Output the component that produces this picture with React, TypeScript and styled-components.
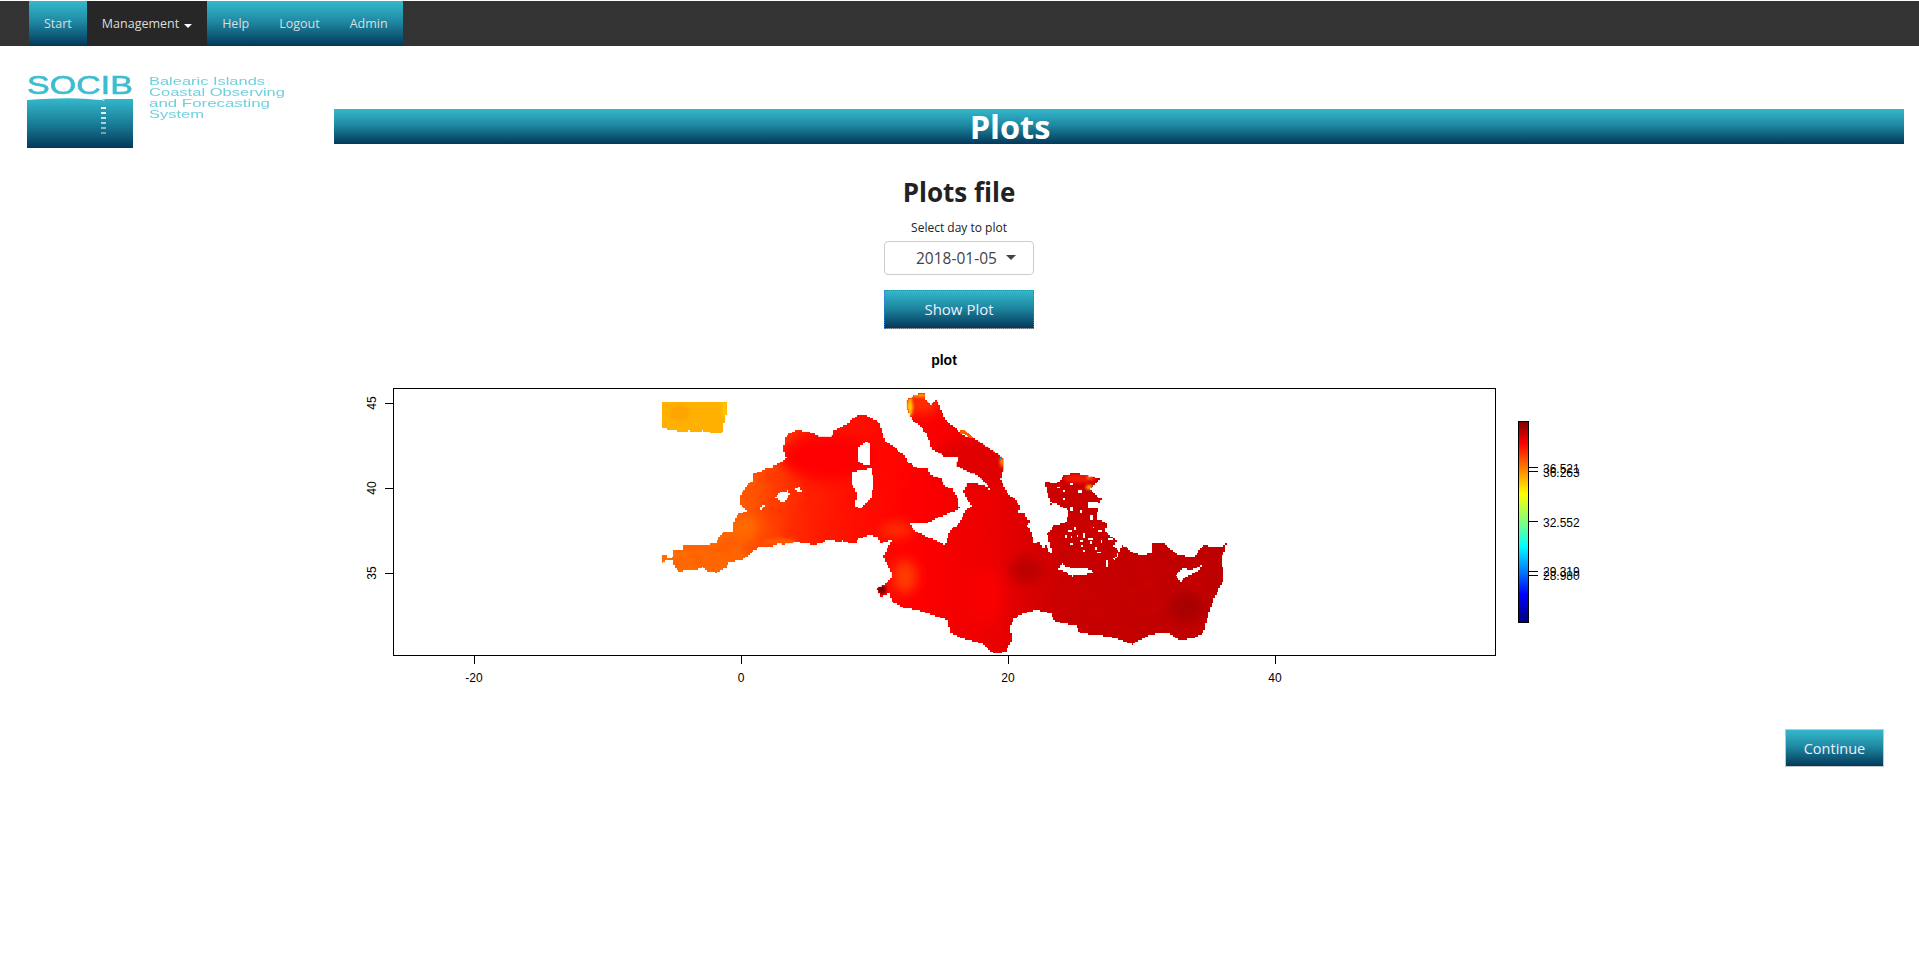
import React from 'react';
import styled, { createGlobalStyle, css } from 'styled-components';

const GlobalStyle = createGlobalStyle`
  html, body {
    margin: 0;
    padding: 0;
    background: #fff;
    font-family: 'Open Sans', 'Liberation Sans', sans-serif;
    font-size: 14px;
    color: #222;
  }
`;

const oceanGradient = css`
  background: linear-gradient(to bottom, #35b8cc 0%, #1f8aa3 45%, #03385a 100%);
`;

type Pt = [number, number];

// the plot comes out of R as a coarse raster, so coastlines get snapped to its cells
const CELL = 5;
const toCells = (pts: Pt[]): string => {
  const snap = (v: number) => Math.round(v / CELL) * CELL;
  let d = '';
  let px = 0;
  let py = 0;
  pts.forEach((p, i) => {
    const q = pts[(i + 1) % pts.length];
    const steps = Math.max(1, Math.ceil(Math.max(Math.abs(q[0] - p[0]), Math.abs(q[1] - p[1])) / CELL));
    for (let s = 0; s < steps; s++) {
      const x = snap(p[0] + ((q[0] - p[0]) * s) / steps);
      const y = snap(p[1] + ((q[1] - p[1]) * s) / steps);
      if (!d) d = `M${x} ${y}`;
      else {
        if (x !== px) d += `H${x}`;
        if (y !== py) d += `V${y}`;
      }
      px = x;
      py = y;
    }
  });
  return d + 'Z';
};

const BISCAY: Pt[] = [
  [936, 96], [1131, 96], [1128, 135], [1120, 175], [1118, 187], [1090, 191], [1080, 187], [1060, 182],
  [1040, 185], [1020, 182], [1000, 185], [980, 182], [960, 180], [945, 176], [936, 176],
];

const WEST: Pt[] = [
  [936, 555], [945, 555], [950, 565], [965, 562], [972, 540], [1000, 538], [1002, 526], [1070, 526],
  [1080, 520], [1095, 522], [1105, 500], [1120, 484], [1150, 483], [1152, 455], [1165, 432], [1190, 422],
  [1168, 395], [1170, 375], [1190, 345], [1212, 325], [1212, 312], [1240, 298], [1265, 295], [1270, 285],
  [1300, 270], [1310, 262], [1302, 240], [1303, 205], [1315, 190], [1335, 180], [1370, 185], [1390, 190],
  [1410, 202], [1445, 197], [1450, 180], [1480, 165], [1520, 150], [1520, 520], [1500, 518], [1480, 512],
  [1465, 515], [1450, 508], [1435, 508], [1420, 518], [1395, 525], [1370, 520], [1340, 516], [1300, 524],
  [1290, 520], [1265, 530], [1230, 532], [1210, 545], [1180, 570], [1160, 572], [1140, 575], [1128, 595],
  [1100, 608], [1075, 605], [1060, 590], [1040, 602], [1015, 602], [990, 603], [975, 590], [968, 572],
  [950, 572], [936, 582],
];

const WEST_HOLES: Pt[][] = [
  [[1273, 380], [1288, 365], [1310, 362], [1318, 375], [1310, 392], [1295, 395], [1285, 385]],
  [[1330, 358], [1345, 352], [1353, 366], [1340, 362]],
  [[1228, 410], [1238, 402], [1243, 410], [1236, 420]],
];

const EAST_RAW: Pt[] = [
  [0, 150], [20, 135], [45, 135], [65, 145], [85, 155], [95, 185], [105, 215], [125, 225], [140, 240],
  [165, 260], [170, 275], [200, 295], [230, 295], [240, 315], [270, 325], [285, 350], [305, 355], [325, 395],
  [328, 415], [310, 425], [275, 440], [230, 460], [175, 460], [195, 485], [240, 505], [285, 525], [300, 480],
  [325, 460], [345, 420], [365, 405], [345, 375], [340, 365], [350, 340], [375, 340], [410, 350], [420, 365],
  [415, 345], [385, 315], [345, 300], [320, 285], [325, 262], [285, 258], [245, 235], [235, 200], [215, 170],
  [185, 145], [172, 115], [172, 90], [190, 75], [225, 68], [225, 90], [240, 105], [255, 90], [265, 100],
  [275, 130], [285, 150], [315, 175], [335, 195], [370, 205], [400, 225], [445, 255], [460, 270], [460, 300],
  [452, 330], [470, 370], [490, 385], [510, 410], [505, 430], [520, 430], [530, 450], [550, 445], [530, 470],
  [545, 490], [550, 520], [565, 515], [578, 540], [585, 525], [598, 550], [605, 545], [592, 490], [610, 465],
  [640, 460], [650, 450], [655, 420], [620, 400], [598, 405], [603, 395], [590, 360], [585, 335], [610, 340],
  [630, 330], [640, 315], [670, 310], [710, 316], [750, 328], [735, 345], [720, 360], [745, 385], [755, 385],
  [745, 410], [740, 440], [770, 465], [765, 485], [800, 515], [790, 530], [805, 545], [815, 525], [850, 550],
  [880, 555], [905, 548], [905, 520], [940, 520], [980, 555], [1030, 560], [1060, 525], [1090, 530],
  [1110, 530], [1128, 520], [1125, 540], [1115, 560], [1120, 630], [1100, 670], [1080, 720], [1060, 790],
  [1030, 805], [990, 810], [960, 790], [930, 790], [900, 795], [850, 823], [800, 805], [750, 795], [690, 790],
  [680, 765], [640, 760], [610, 750], [605, 730], [560, 720], [520, 730], [490, 750], [478, 775], [487, 810],
  [470, 845], [435, 852], [400, 820], [340, 805], [300, 785], [295, 750], [250, 735], [210, 722], [160, 712],
  [125, 695], [120, 670], [95, 680], [80, 655], [105, 640], [125, 620], [122, 600], [100, 555], [125, 510],
  [92, 522], [85, 500], [60, 495], [20, 510], [0, 518],
];
const EAST: Pt[] = EAST_RAW.map(([x, y]) => [x + 1500, y]);

const EAST_HOLES: Pt[][] = [
  [[25, 230], [55, 210], [62, 240], [60, 285], [45, 285], [25, 270]],
  [[5, 305], [30, 300], [65, 295], [70, 340], [65, 385], [35, 415], [15, 405], [20, 370], [5, 340]],
  [[622, 600], [635, 580], [650, 592], [710, 595], [732, 610], [670, 618], [640, 602]],
  [[975, 615], [995, 595], [1020, 600], [1065, 578], [1045, 605], [1010, 620], [995, 635]],
  [[790, 565], [805, 545], [807, 555], [795, 570]],
];

// small Aegean islands, one raster cell or a few: x, y, w, h
const ISLETS: [number, number, number, number][] = [
  [660, 340, 10, 5], [685, 360, 10, 10], [620, 350, 10, 5], [640, 360, 5, 5], [660, 412, 10, 10], [690, 420, 5, 10],
  [715, 395, 30, 20], [720, 435, 10, 15], [740, 430, 15, 20], [655, 480, 10, 5], [672, 470, 5, 10], [690, 510, 10, 5],
  [660, 520, 10, 5], [700, 490, 5, 15], [745, 480, 10, 5], [752, 510, 5, 10], [720, 512, 5, 10], [694, 525, 5, 5],
  [662, 498, 5, 5], [742, 545, 10, 5], [768, 570, 5, 20], [700, 540, 5, 5], [728, 470, 5, 5], [640, 385, 5, 5],
  [610, 398, 10, 5], [715, 505, 15, 5], [775, 505, 15, 5], [735, 530, 5, 10], [645, 495, 5, 10], [680, 495, 5, 5],
];

const JET = [
  ['0', '#800000'], ['0.11', '#ff0000'], ['0.36', '#ffff00'], ['0.5', '#7fff7f'], ['0.62', '#00ffff'],
  ['0.86', '#0000ff'], ['1', '#00007f'],
];

const navLinks = [
  { label: 'Start' },
  { label: 'Management', dark: true, caret: true },
  { label: 'Help' },
  { label: 'Logout' },
  { label: 'Admin' },
];

const logoLines: [string, number, number][] = [
  ['Balearic Islands', 13, 116],
  ['Coastal Observing', 24, 136],
  ['and Forecasting', 35, 121],
  ['System', 46, 55],
];

const CoastalLogo = () => (
  <LogoSvg viewBox="0 0 290 76" width="290" height="76">
    <defs>
      <linearGradient id="logoSea" x1="0" y1="0" x2="0" y2="1">
        <stop offset="0" stopColor="#35b8cc" />
        <stop offset="0.5" stopColor="#1a7f99" />
        <stop offset="1" stopColor="#03385a" />
      </linearGradient>
    </defs>
    <text x="27" y="22" fontFamily="'Liberation Sans', sans-serif" fontSize="26" textLength="106"
      lengthAdjust="spacingAndGlyphs" fill="#3dbdd0" stroke="#3dbdd0" strokeWidth="0.6">SOCIB</text>
    <path d="M27 28 Q 65 25 88 27 T 102 27 L 103.500 29 L 105 27 L133 27 V76 H27 Z" fill="url(#logoSea)" />
    {[35, 40, 45, 50, 55, 60].map((y, i) => (
      <rect key={y} x="101" y={y} width="5" height="2" fill="#fff" opacity={1 - i * 0.12} />
    ))}
    {logoLines.map(([t, y, w]) => (
      <text key={t} x="149" y={y} fontFamily="'Liberation Sans', sans-serif" fontSize="11"
        textLength={w} lengthAdjust="spacingAndGlyphs" fill="#6fd0de">{t}</text>
    ))}
  </LogoSvg>
);

const MedPlot = () => (
  <PlotSvg viewBox="320 345 1278 345" width="1278" height="345">
    <defs>
      <linearGradient id="medSst" gradientUnits="userSpaceOnUse" x1="936" y1="0" x2="2630" y2="0">
        <stop offset="0" stopColor="#ff7000" />
        <stop offset="0.138" stopColor="#ff6400" />
        <stop offset="0.19" stopColor="#ff4400" />
        <stop offset="0.262" stopColor="#ff2000" />
        <stop offset="0.333" stopColor="#ff1000" />
        <stop offset="0.45" stopColor="#ff0000" />
        <stop offset="0.6" stopColor="#e80000" />
        <stop offset="0.71" stopColor="#c80000" />
        <stop offset="1" stopColor="#bc0000" />
      </linearGradient>
      <linearGradient id="jet" x1="0" y1="0" x2="0" y2="1">
        {JET.map(([o, c]) => <stop key={o} offset={o} stopColor={c} />)}
      </linearGradient>
      <filter id="soft" x="-50%" y="-50%" width="200%" height="200%"><feGaussianBlur stdDeviation="18" /></filter>
      <filter id="softer" x="-50%" y="-50%" width="200%" height="200%"><feGaussianBlur stdDeviation="5" /></filter>
      <filter id="mottle" x="0" y="0" width="100%" height="100%" colorInterpolationFilters="sRGB">
        <feTurbulence type="fractalNoise" baseFrequency="0.014 0.022" numOctaves="3" seed="4" />
        <feColorMatrix values="0 0 0 0 1  0 0 0 0 0  0 0 0 0 0  1 0 0 0 0" />
        <feComponentTransfer>
          <feFuncA type="discrete" tableValues="0 0 0 0 0.1 0.2 0.3 0.4 0.5" />
        </feComponentTransfer>
      </filter>
      <clipPath id="seaClip">
        <path d={toCells(WEST)} />
        <path d={toCells(EAST)} />
      </clipPath>
      <clipPath id="biscayClip"><path d={toCells(BISCAY)} /></clipPath>
    </defs>

    <text x="944" y="365" textAnchor="middle" fontSize="14" fontWeight="700" fontFamily="'Liberation Sans', sans-serif" fill="#000">plot</text>

    <g transform="translate(350 370) scale(0.33333)" shapeRendering="crispEdges">
      <path d={toCells(BISCAY)} fill="#ffb000" />
      <g clipPath="url(#biscayClip)">
        <ellipse cx="990" cy="130" rx="30" ry="25" fill="#ffa400" filter="url(#softer)" />
        <rect x="1115" y="90" width="20" height="50" fill="#ffc400" filter="url(#softer)" />
      </g>
      <path d={toCells(WEST)} fill="url(#medSst)" />
      <path d={toCells(EAST)} fill="url(#medSst)" />
      <g clipPath="url(#seaClip)">
        <rect x="936" y="60" width="1710" height="800" filter="url(#mottle)" opacity="0.35" />
        <ellipse cx="1440" cy="260" rx="150" ry="70" fill="#ff0000" filter="url(#soft)" />
        <ellipse cx="1190" cy="470" rx="30" ry="30" fill="#ff7000" filter="url(#soft)" />
        <ellipse cx="1290" cy="515" rx="50" ry="10" fill="#ff5800" filter="url(#softer)" />
        <g transform="translate(1500 0)">
          <ellipse cx="165" cy="620" rx="35" ry="50" fill="#ff3c00" filter="url(#soft)" />
          <ellipse cx="140" cy="480" rx="50" ry="20" fill="#ff3400" filter="url(#soft)" />
          <ellipse cx="95" cy="660" rx="14" ry="14" fill="#7a0000" filter="url(#softer)" />
          <ellipse cx="1010" cy="710" rx="50" ry="45" fill="#a80000" filter="url(#soft)" />
          <ellipse cx="530" cy="600" rx="50" ry="40" fill="#bc0000" filter="url(#soft)" />
          <ellipse cx="400" cy="680" rx="60" ry="90" fill="#f80000" filter="url(#soft)" />
          <ellipse cx="370" cy="280" rx="130" ry="70" fill="#e00000" filter="url(#soft)" />
          <ellipse cx="220" cy="100" rx="45" ry="32" fill="#ff3000" filter="url(#soft)" />
          <ellipse cx="180" cy="110" rx="8" ry="30" fill="#ffd000" filter="url(#softer)" />
          <ellipse cx="205" cy="75" rx="26" ry="7" fill="#ffa000" filter="url(#softer)" />
          <ellipse cx="690" cy="325" rx="50" ry="14" fill="#f01800" filter="url(#softer)" />
          <ellipse cx="718" cy="352" rx="10" ry="6" fill="#ffd000" filter="url(#softer)" />
          <ellipse cx="718" cy="322" rx="8" ry="4" fill="#ffa000" filter="url(#softer)" />
          <ellipse cx="456" cy="275" rx="5" ry="16" fill="#ffa000" filter="url(#softer)" />
        </g>
      </g>
      <g transform="translate(1500 0)">
        <path d="M331 181 H345 L372 205 L362 205 L345 193 H331 Z" fill="#ff5a00" />
        <rect x="449" y="264" width="3" height="3" fill="#00a0ff" />
        {EAST_HOLES.map((h, i) => <path key={i} d={toCells(h)} fill="#fff" />)}
        {ISLETS.map(([x, y, w, h], i) => <rect key={i} x={x} y={y} width={w} height={h} fill="#fff" />)}
      </g>
      {WEST_HOLES.map((h, i) => <path key={i} d={toCells(h)} fill="#fff" />)}
    </g>

    <rect x="393.500" y="388.500" width="1102" height="267" fill="none" stroke="#000" />
    <g stroke="#000" shapeRendering="crispEdges">
      {[403, 488, 573].map(y => <line key={y} x1="385" x2="393" y1={y} y2={y} />)}
      {[474, 741, 1008, 1275].map(x => <line key={x} x1={x} x2={x} y1="656" y2="664" />)}
      {[467, 471, 521, 571, 575].map(y => <line key={y} x1="1529" x2="1538" y1={y} y2={y} />)}
    </g>
    <g fontFamily="'Liberation Sans', sans-serif" fontSize="12" fill="#000">
      {[['45', 403], ['40', 488], ['35', 573]].map(([t, y]) => (
        <text key={t} transform={`translate(376 ${y}) rotate(-90)`} textAnchor="middle">{t}</text>
      ))}
      {[['-20', 474], ['0', 741], ['20', 1008], ['40', 1275]].map(([t, x]) => (
        <text key={t} x={x} y="682" textAnchor="middle">{t}</text>
      ))}
      {[['36.521', 473], ['36.263', 477], ['32.552', 527], ['29.319', 576], ['28.980', 580]].map(([t, y]) => (
        <text key={t} x="1543" y={y}>{t}</text>
      ))}
    </g>
    <rect x="1518.500" y="421.500" width="10" height="201" fill="url(#jet)" stroke="#000" />
  </PlotSvg>
);

export default function App() {
  return (
    <>
      <GlobalStyle />
      <Navbar>
        <NavList>
          {navLinks.map(l => (
            <NavItem key={l.label} $dark={l.dark}>
              {l.label}
              {l.caret && <NavCaret />}
            </NavItem>
          ))}
        </NavList>
      </Navbar>
      <BrandRow>
        <CoastalLogo />
        <PageBanner>Plots</PageBanner>
      </BrandRow>
      <Content>
        <Heading>Plots file</Heading>
        <FieldLabel>Select day to plot</FieldLabel>
        <DateSelect>
          2018-01-05
          <SelectCaret />
        </DateSelect>
        <ShowPlotButton>Show Plot</ShowPlotButton>
        <MedPlot />
      </Content>
      <Footer>
        <ContinueButton>Continue</ContinueButton>
      </Footer>
    </>
  );
}

const Navbar = styled.nav`
  box-sizing: border-box;
  height: 45px;
  margin-top: 1px;
  padding-left: 29px;
  background: #333;
`;

const NavList = styled.div`
  display: flex;
  height: 45px;
`;

const NavItem = styled.a<{ $dark?: boolean }>`
  display: flex;
  align-items: center;
  padding: 0 15px;
  font-size: 12.500px;
  color: #dcdcdc;
  ${oceanGradient};
  ${p => p.$dark && css`background: #272727;`}
`;

const NavCaret = styled.span`
  width: 0;
  height: 0;
  margin: 4px 0 0 5px;
  border-top: 4px solid #fff;
  border-left: 4px solid transparent;
  border-right: 4px solid transparent;
`;

const BrandRow = styled.div`
  display: flex;
  align-items: flex-start;
  height: 97px;
  padding-right: 15px;
`;

const LogoSvg = styled.svg`
  display: block;
  flex: 0 0 auto;
  margin: 26px 44px 0 0;
  overflow: visible;
  filter: blur(0.5px);
`;

const PageBanner = styled.h1`
  flex: 1;
  box-sizing: border-box;
  height: 35px;
  margin: 63px 0 0;
  padding-right: 218px;
  font-size: 32.500px;
  font-weight: 700;
  line-height: 35px;
  text-align: center;
  color: #fff;
  ${oceanGradient};
`;

const Content = styled.main`
  display: flex;
  flex-direction: column;
  align-items: center;
  padding-right: 1px;
`;

const Heading = styled.h2`
  margin: 31px 0 0;
  font-size: 26px;
  font-weight: 700;
  line-height: 36px;
  color: #222;
`;

const FieldLabel = styled.div`
  margin-top: 9px;
  font-size: 12px;
  line-height: 17px;
`;

const DateSelect = styled.div`
  position: relative;
  box-sizing: border-box;
  width: 150px;
  height: 34px;
  margin-top: 5px;
  padding-left: 31px;
  border: 1px solid #ccc;
  border-radius: 4px;
  font-size: 15.500px;
  line-height: 32px;
  color: #444;
`;

const SelectCaret = styled.span`
  position: absolute;
  top: 13px;
  right: 17px;
  border-top: 5px solid #444;
  border-left: 5px solid transparent;
  border-right: 5px solid transparent;
`;

const ActionButton = styled.button`
  box-sizing: border-box;
  padding: 0;
  font-family: 'Open Sans', 'Liberation Sans', sans-serif;
  font-size: 15px;
  color: #eef;
  ${oceanGradient};
`;

const ShowPlotButton = styled(ActionButton)`
  width: 150px;
  height: 39px;
  margin-top: 15px;
  border: 0;
  border-bottom: 1px solid #999;
  outline: 1px dotted #2a7fd0;
  outline-offset: -1px;
`;

const PlotSvg = styled.svg`
  display: block;
  margin-top: 16px;
`;

const Footer = styled.footer`
  display: flex;
  justify-content: flex-end;
  margin-top: 39px;
  padding-right: 35px;
`;

const ContinueButton = styled(ActionButton)`
  width: 99px;
  height: 38px;
  border: 1px solid #c4c8cc;
  font-size: 14.500px;
`;
